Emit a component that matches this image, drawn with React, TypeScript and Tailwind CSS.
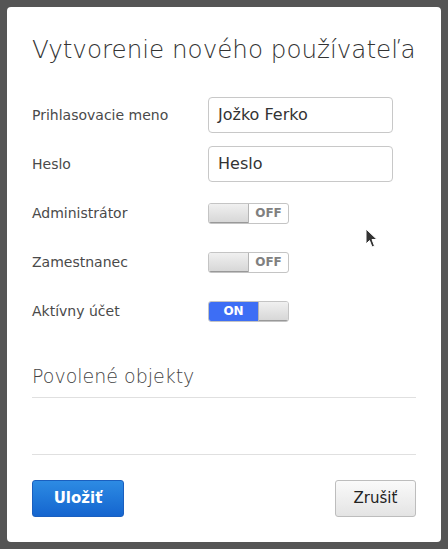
const font = { fontFamily: '"DejaVu Sans", Verdana, sans-serif' };

const Toggle = ({ on }: { on: boolean }) => (
  <div className="flex h-[21px] w-[81px] overflow-hidden rounded-[3px] border border-[#c4c4c4] bg-white">
    {on ? (
      <>
        <div className="flex w-[49px] items-center justify-center bg-[#3d6ef5] text-[12px] font-bold text-white">ON</div>
        <div className="flex-1 border-l border-[#b5b5b5] bg-gradient-to-b from-[#f0f0f0] to-[#d6d6d6] shadow-[inset_0_-1px_0_#999]" />
      </>
    ) : (
      <>
        <div className="w-[40px] border-r border-[#b5b5b5] bg-gradient-to-b from-[#f0f0f0] to-[#d6d6d6] shadow-[inset_0_-1px_0_#999]" />
        <div className="flex flex-1 items-center justify-center text-[12px] font-bold text-[#808080]">OFF</div>
      </>
    )}
  </div>
);

const Row = ({ label, children }: { label: string; children: React.ReactNode }) => (
  <div className="flex h-[36px] items-center">
    <div className="w-[176px] text-[14px] text-[#4a4a4a]">{label}</div>
    {children}
  </div>
);

const Field = ({ value }: { value: string }) => (
  <div className="flex h-[36px] w-[185px] items-center rounded-[4px] border border-[#c8c8c8] px-[9px] text-[16px] text-[#333]">
    {value}
  </div>
);

export default function App() {
  return (
    <div className="relative h-[549px] w-[448px] bg-[#555555] p-[7px]" style={font}>
      <div className="flex h-[535px] w-[434px] flex-col rounded-[4px] bg-white px-[25px]">
        <h1 className="mt-[27px] text-[24.6px] font-extralight leading-[32px] text-[#333]">
          Vytvorenie nového používateľa
        </h1>

        <div className="mt-[31px] flex flex-col gap-[13px]">
          <Row label="Prihlasovacie meno"><Field value="Jožko Ferko" /></Row>
          <Row label="Heslo"><Field value="Heslo" /></Row>
          <Row label="Administrátor"><Toggle on={false} /></Row>
          <Row label="Zamestnanec"><Toggle on={false} /></Row>
          <Row label="Aktívny účet"><Toggle on /></Row>
        </div>

        <div className="mt-[34px] border-b border-[#e0e0e0] pb-[8px] text-[19px] font-extralight leading-[26px] text-[#444]">
          Povolené objekty
        </div>
        <div className="h-[57px] border-b border-[#e0e0e0]" />

        <div className="mt-[25px] flex justify-between">
          <button className="h-[37px] w-[92px] rounded-[3px] border border-[#1a5fbf] bg-gradient-to-b from-[#2d8be3] to-[#1565cf] text-[15px] font-bold text-white">
            Uložiť
          </button>
          <button className="h-[37px] w-[81px] rounded-[3px] border border-[#bdbdbd] bg-gradient-to-b from-[#fafafa] to-[#e4e4e4] text-[15px] text-[#222]">
            Zrušiť
          </button>
        </div>
      </div>

      <svg className="absolute left-[365px] top-[228px]" width="13" height="21" viewBox="0 0 13 21">
        <path d="M1 1 L1 16 L4.5 12.5 L7 19 L9.5 18 L7 11.5 L12 11.5 Z" fill="#333" stroke="#fff" strokeWidth="1" />
      </svg>
    </div>
  );
}
